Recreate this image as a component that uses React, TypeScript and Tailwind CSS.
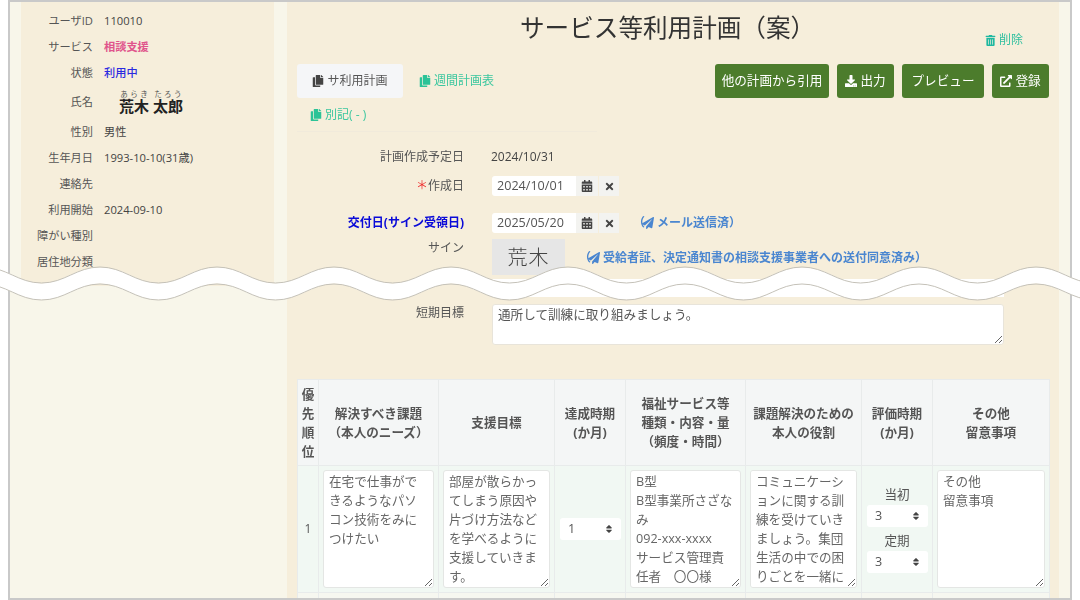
import React from 'react';
import { FaCopy, FaTrashAlt, FaDownload, FaExternalLinkAlt, FaCalendarAlt, FaTimes, FaPaperPlane, FaSort } from 'react-icons/fa';

const FONT = '"Open Sans", "Noto Sans CJK JP", sans-serif';

const PROFILE = [
  { label: 'ユーザID', value: '110010', cls: '' },
  { label: 'サービス', value: '相談支援', cls: 'text-[#e0558c] font-bold' },
  { label: '状態', value: '利用中', cls: 'text-[#2a2ae0] font-medium' },
];
const PROFILE2 = [
  { label: '性別', value: '男性' },
  { label: '生年月日', value: '1993-10-10(31歳)' },
  { label: '連絡先', value: '' },
  { label: '利用開始', value: '2024-09-10' },
  { label: '障がい種別', value: '' },
  { label: '居住地分類', value: '' },
];

const COLS = [21, 120, 116, 71, 120, 116, 71, 117];

function wavePath(offset: number) {
  const period = 117;
  const half = period / 2;
  let d = '';
  for (let x = -17; x < 1100; x += period) {
    const top = 267 + offset;
    const bot = 283 + offset;
    if (!d) d = `M${x},${top}`;
    d += ` C${x + half * 0.4},${top} ${x + half * 0.6},${bot} ${x + half},${bot}`;
    d += ` C${x + half * 1.4},${bot} ${x + half * 1.6},${top} ${x + period},${top}`;
  }
  return d;
}

function Row({ label, value, cls }: { label: string; value: string; cls?: string }) {
  return (
    <div className="flex items-center h-[26px]">
      <div className="w-[72px] text-right text-[#555] shrink-0">{label}</div>
      <div className={`ml-[11px] ${cls || 'text-[#444]'}`}>{value}</div>
    </div>
  );
}

function DateInput({ value }: { value: string }) {
  return (
    <div className="flex items-center h-[20px]">
      <div className="w-[84px] h-[20px] bg-white rounded-l-[3px] pl-[5px] text-[#555] text-[12.6px] leading-[20px]">{value}</div>
      <div className="w-[22px] h-[20px] bg-[#f3f3f0] flex items-center justify-center text-[#444] text-[12px]">
        <FaCalendarAlt />
      </div>
      <div className="w-[20px] h-[20px] ml-px bg-[#f3f3f0] flex items-center justify-center text-[#444] text-[11px]">
        <FaTimes />
      </div>
    </div>
  );
}

function FormRow({ label, labelCls, className, children }: { label: React.ReactNode; labelCls?: string; className?: string; children?: React.ReactNode }) {
  return (
    <div className={`flex items-center ${className || ''}`}>
      <div className={`w-[167px] text-right shrink-0 ${labelCls || 'text-[#555]'}`}>{label}</div>
      <div className="ml-[28px] flex items-center">{children}</div>
    </div>
  );
}

function GreenButton({ children, className }: { children: React.ReactNode; className?: string }) {
  return (
    <div className={`h-[34px] bg-[#4c7c2c] rounded-[3px] text-white text-[12.6px] flex items-center justify-center gap-[3px] ${className || ''}`}>
      {children}
    </div>
  );
}

function PeriodSelect({ value, className }: { value: string; className?: string }) {
  return (
    <div className={`relative h-[22px] ${className || ''}`}>
      <select defaultValue={value} className="appearance-none w-full h-full bg-white rounded-[3px] pl-[8px] text-[#555] text-[12.6px] outline-none">
        <option>1</option>
        <option>3</option>
      </select>
      <FaSort className="absolute right-[7px] top-[6px] text-[10px] text-[#444]" />
    </div>
  );
}

const areaCls = 'w-full h-[118px] block bg-white rounded-[3px] border border-[#e4e6e4] px-[5px] py-px text-[12.6px] leading-[19px] text-[#666] outline-none';

function HeadCell({ children }: { children: React.ReactNode }) {
  return <th className="border border-[#e8ebeb] bg-[#f4f6f6] px-px text-center align-middle text-[12.6px] leading-[19px] font-bold text-[#555]">{children}</th>;
}

export default function App() {
  return (
    <div className="relative w-[1080px] h-[600px] overflow-hidden bg-white text-[11.2px]" style={{ fontFamily: FONT }}>
      <div className="ml-[8px] w-[1064px] h-[600px] border-x-2 border-y-2 border-[#c9c9c9] flex overflow-hidden bg-[#f8f6ea]">
        {/* sidebar */}
        <div className="w-[277px] shrink-0 pl-[11px] pr-[13px]">
          <div className="h-[284px] bg-[#f6eedb] pt-[6px]">
            {PROFILE.map((p) => (
              <Row key={p.label} label={p.label} value={p.value} cls={p.cls} />
            ))}
            <div className="flex items-center h-[34px] mt-[-1px]">
              <div className="w-[72px] text-right text-[#555] shrink-0">氏名</div>
              <div className="ml-[26px] text-[15px] font-bold text-[#222] leading-[17px]">
                <ruby>荒木<rt className="text-[7.5px] font-normal text-[#555]">あらき</rt></ruby>{' '}
                <ruby>太郎<rt className="text-[7.5px] font-normal text-[#555]">たろう</rt></ruby>
              </div>
            </div>
            {PROFILE2.map((p) => (
              <Row key={p.label} label={p.label} value={p.value} />
            ))}
          </div>
        </div>

        {/* main */}
        <div className="w-[772px] shrink-0 bg-[#f6eedb] pl-[10px] pr-[9px] text-[12px]">
          <div className="flex h-[62px]">
            <h1 className="ml-[223px] mt-[8px] text-[24.6px] leading-[36px] text-[#333] whitespace-nowrap">サービス等利用計画（案）</h1>
            <div className="ml-auto mr-[27px] mt-[30px] h-[16px] flex items-center gap-[3px] text-[#2fbf9f] text-[12px]">
              <FaTrashAlt className="text-[11px] text-[#1fb8a0]" />
              <span>削除</span>
            </div>
          </div>

          <div className="flex justify-between">
            <div className="w-[300px] flex flex-wrap border-b border-[#f1eadb] h-[68px]">
              <div className="w-[106px] h-[34px] bg-[#f5f6f8] rounded-[3px] flex items-center justify-center gap-[3px] text-[#555]">
                <FaCopy className="text-[#444]" />
                <span>サ利用計画</span>
              </div>
              <div className="ml-[16px] h-[34px] flex items-center gap-[3px] text-[#3cc79f]">
                <FaCopy className="text-[#2cc397]" />
                <span>週間計画表</span>
              </div>
              <div className="w-full pl-[13px] h-[34px] flex items-center gap-[3px] text-[#3cc79f]">
                <FaCopy className="text-[#2cc397]" />
                <span>別記( - )</span>
              </div>
            </div>
            <div className="flex gap-[8px] mr-[1px]">
              <GreenButton className="w-[114px]">他の計画から引用</GreenButton>
              <GreenButton className="w-[57px]"><FaDownload className="text-[12px]" />出力</GreenButton>
              <GreenButton className="w-[82px]">プレビュー</GreenButton>
              <GreenButton className="w-[57px]"><FaExternalLinkAlt className="text-[12px]" />登録</GreenButton>
            </div>
          </div>

          <FormRow label="計画作成予定日" className="h-[20px] mt-[15px]">
            <span className="text-[#444] ml-[-1px]">2024/10/31</span>
          </FormRow>
          <FormRow label={<><span className="text-[#e33]">＊</span>作成日</>} className="h-[20px] mt-[9px]">
            <DateInput value="2024/10/01" />
          </FormRow>
          <FormRow label="交付日(サイン受領日)" labelCls="text-[#0a0ad8] font-bold" className="h-[20px] mt-[17px]">
            <DateInput value="2025/05/20" />
            <span className="ml-[14px] text-[#4a86d0] font-bold flex items-center gap-[3px] whitespace-nowrap">
              （<FaPaperPlane className="text-[12px] ml-[-6px]" /> メール送信済）
            </span>
          </FormRow>
          <FormRow label="サイン" className="h-[36px] mt-[6px] items-start">
            <div className="w-[73px] h-[36px] bg-[#e6e6e6] flex items-center justify-center text-[20px] text-[#444] tracking-[1px]" style={{ fontFamily: '"Noto Sans CJK JP", sans-serif', fontWeight: 300 }}>荒木</div>
            <span className="ml-[14px] mt-[2px] text-[#4a86d0] font-bold flex items-center gap-[3px] whitespace-nowrap">
              （<FaPaperPlane className="text-[12px] ml-[-6px]" /> 受給者証、決定通知書の相談支援事業者への送付同意済み）
            </span>
          </FormRow>
          <div className="h-[18px] mt-[4px] ml-[195px] w-[512px] bg-white" />
          <FormRow label="短期目標" className="mt-[7px] items-start">
            <textarea
              defaultValue="通所して訓練に取り組みましょう。"
              className="w-[512px] h-[41px] block bg-white rounded-[3px] border border-[#e8e4da] px-[5px] py-0 text-[12.6px] leading-[19px] text-[#555] outline-none"
            />
          </FormRow>

          <table className="mt-[34px] w-[753px] table-fixed border-collapse">
            <colgroup>
              {COLS.map((w, i) => (
                <col key={i} style={{ width: w }} />
              ))}
            </colgroup>
            <thead>
              <tr className="h-[86px]">
                <HeadCell>優<br />先<br />順<br />位</HeadCell>
                <HeadCell>解決すべき課題<br />（本人のニーズ）</HeadCell>
                <HeadCell>支援目標</HeadCell>
                <HeadCell>達成時期<br />(か月)</HeadCell>
                <HeadCell>福祉サービス等<br />種類・内容・量<br />（頻度・時間）</HeadCell>
                <HeadCell>課題解決のための<br />本人の役割</HeadCell>
                <HeadCell>評価時期<br />(か月)</HeadCell>
                <HeadCell>その他<br />留意事項</HeadCell>
              </tr>
            </thead>
            <tbody>
              <tr className="bg-[#f1f8f3] h-[126px]">
                <td className="border border-[#e8ebeb] text-center text-[#555] text-[12px]">1</td>
                <td className="border border-[#e8ebeb] px-[4px] py-[4px]">
                  <textarea className={areaCls} defaultValue="在宅で仕事ができるようなパソコン技術をみにつけたい" />
                </td>
                <td className="border border-[#e8ebeb] px-[4px] py-[4px]">
                  <textarea className={areaCls} defaultValue="部屋が散らかってしまう原因や片づけ方法などを学べるように支援していきます。" />
                </td>
                <td className="border border-[#e8ebeb] px-[5px]">
                  <PeriodSelect value="1" className="w-[61px]" />
                </td>
                <td className="border border-[#e8ebeb] px-[4px] py-[4px]">
                  <textarea className={areaCls} defaultValue={'B型\nB型事業所さざなみ\n092-xxx-xxxx\nサービス管理責任者　〇〇様'} />
                </td>
                <td className="border border-[#e8ebeb] px-[4px] py-[4px]">
                  <textarea className={areaCls} defaultValue="コミュニケーションに関する訓練を受けていきましょう。集団生活の中での困りごとを一緒に考えていきましょう。作業を通して自信をつけていきましょう。" />
                </td>
                <td className="border border-[#e8ebeb] px-[5px] text-center text-[#555] text-[12.6px]">
                  <div className="leading-[19px] mb-[1px]">当初</div>
                  <PeriodSelect value="3" className="w-[61px]" />
                  <div className="leading-[19px] mt-[4px] mb-[1px]">定期</div>
                  <PeriodSelect value="3" className="w-[61px]" />
                </td>
                <td className="border border-[#e8ebeb] px-[4px] py-[4px]">
                  <textarea className={areaCls} defaultValue={'その他\n留意事項'} />
                </td>
              </tr>
              <tr className="bg-[#f6f7f0] h-[20px]">
                {COLS.map((w, i) => (
                  <td key={i} className="border border-[#e8ebeb]" />
                ))}
              </tr>
            </tbody>
          </table>
        </div>
      </div>

      {/* torn-page wave over the screenshot */}
      <svg className="absolute left-0 top-0 pointer-events-none" width="1080" height="600" viewBox="0 0 1080 600">
        <path d={`${wavePath(0)} L1100,284 ${wavePath(17).replace(/^M[^ ]+/, '')} Z`} fill="none" />
        <path d={wavePath(8.5)} fill="none" stroke="#fff" strokeWidth="16" />
        <path d={wavePath(0)} fill="none" stroke="#c4c1b8" strokeWidth="1" />
        <path d={wavePath(17)} fill="none" stroke="#c4c1b8" strokeWidth="1" />
      </svg>
    </div>
  );
}
